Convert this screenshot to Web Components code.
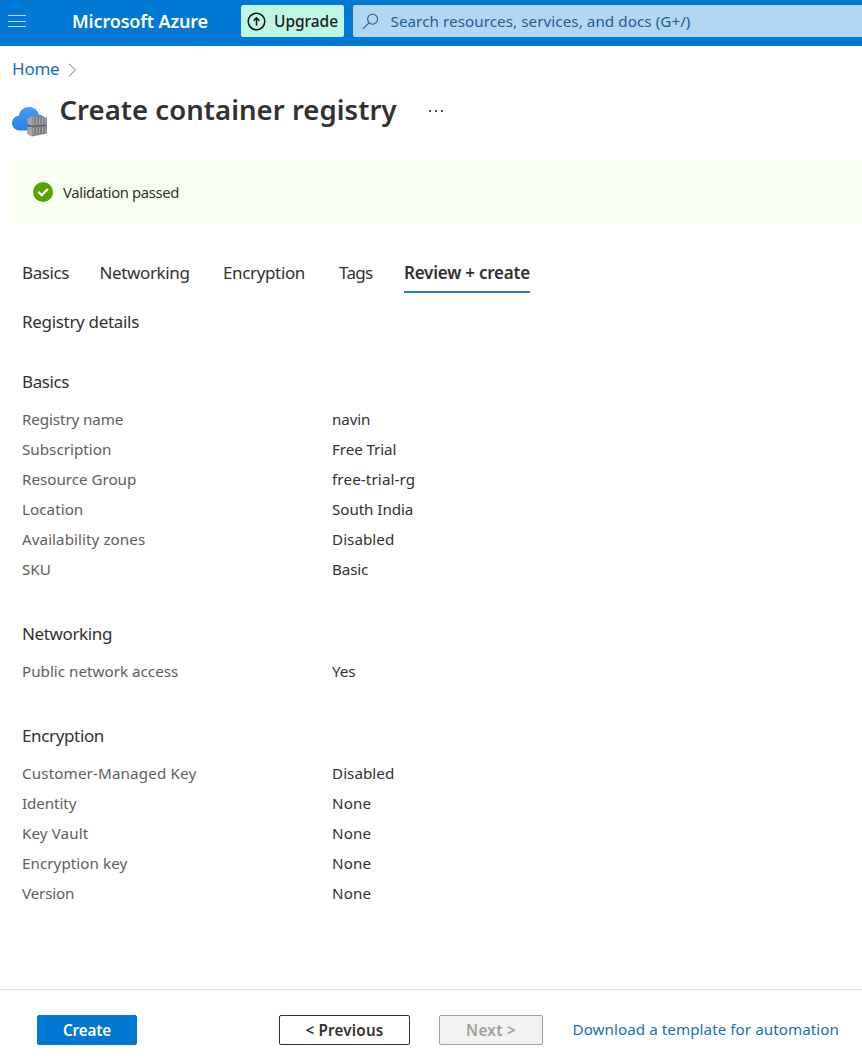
<!DOCTYPE html>
<html lang="en">
<head>
<meta charset="utf-8">
<title>Create container registry - Microsoft Azure</title>
<style>
html,body{margin:0;height:100%;background:#fff}
body{font-family:"Segoe UI","Noto Sans","Open Sans",sans-serif;color:#323130;overflow:hidden}
</style>
</head>
<body>
<portal-page></portal-page>
<script>
const define = (name, html, setup) => {
  const t = document.createElement('template');
  t.innerHTML = html;
  customElements.define(name, class extends HTMLElement {
    constructor() {
      super();
      this.attachShadow({mode: 'open'}).append(t.content.cloneNode(true));
    }
    connectedCallback() { if (setup) setup(this, this.shadowRoot); }
  });
};

/* Single line of text whose tracking is tuned to a given width. */
define('fit-text', `<style>:host{display:inline-block;white-space:pre;line-height:1.36}span{display:inline-block}</style><span></span>`, (el, root) => {
  const s = root.querySelector('span');
  s.textContent = el.getAttribute('text');
  const w = parseFloat(el.getAttribute('w'));
  const n = s.textContent.length;
  if (w) s.style.letterSpacing = ((w - s.getBoundingClientRect().width) / n).toFixed(3) + 'px';
});

define('portal-header', `<style>
:host{display:flex;height:46px;background:#0078d4;color:#fff;align-items:flex-start;flex:none}
.menu{width:18px;height:12px;margin:15px 0 0 8px;flex:none}
.brand{margin:9px 0 0 46px;font-size:18px;font-weight:600;width:169px;flex:none;line-height:0}
.up{display:flex;align-items:center;box-sizing:border-box;width:103px;height:32px;margin-top:5px;background:#bdf6e4;border-radius:2px;padding-left:6px;color:#1b1a19;font-size:15.5px;font-weight:540;flex:none}
.up svg{margin-right:8px;flex:none}
.up fit-text{margin-top:2px}
.search{display:flex;align-items:center;height:32px;margin:5px 0 0 9px;background:#b3d6f2;flex:1;border-radius:2px 0 0 2px;color:#245b8f;font-size:15.2px;padding-left:9px}
.search svg{margin-right:11.500px}
</style>
<svg class="menu" viewBox="0 0 18 12"><path d="M0 .5h18M0 6.5h18M0 11.5h18" stroke="#b9dcf5" stroke-width="1"/></svg>
<div class="brand"><fit-text text="Microsoft Azure" w="136"></fit-text></div>
<div class="up"><svg width="19" height="19" viewBox="0 0 19 19" fill="none" stroke="#111" stroke-width="1.5"><circle cx="9.5" cy="9.5" r="8.3"/><path d="M9.5 13.5V6M6.6 8.7l2.9-2.9 2.9 2.9"/></svg><fit-text text="Upgrade" w="64"></fit-text></div>
<div class="search"><svg width="17" height="17" viewBox="0 0 17 17" fill="none" stroke="#245b8f" stroke-width="1.1"><circle cx="10.6" cy="6.2" r="5"/><path d="M7 9.8.9 15.8"/></svg><fit-text text="Search resources, services, and docs (G+/)" w="300"></fit-text></div>`);

define('registry-icon', `<style>:host{display:block;width:36px;height:31px}</style>
<svg width="36" height="31" viewBox="0 0 36 31"><defs><linearGradient id="c" x1="0" y1="0" x2="0" y2="1"><stop offset="0" stop-color="#469cf2"/><stop offset="1" stop-color="#2b7de6"/></linearGradient></defs>
<path d="M8 24.5C3.5 24.5 0 21.3 0 17.2c0-4 3-6.8 6.8-7.4C7.9 4.3 11.8 1 17 1c4.800 0 8.700 3 10 7.800 4.500.6 7.400 3.500 7.400 7.700 0 4.500-3.500 8-8 8z" fill="url(#c)"/>
<path d="M15.500 12.500 20 10l15 1.500v7L21 20l-5.500-1.500z" fill="#8f8f8f"/>
<path d="M15.500 21.500l5.500-1.500 14-.5v8L20 30.500l-4.500-2.500z" fill="#858585"/>
<path d="M15.500 12.500 20 10v9.600l-4.500-1.100zM15.500 21.500 20 20.200v10.300l-4.500-2.500z" fill="#a5a5a5"/>
<path d="M15.500 19l5 1.500L35 19" fill="none" stroke="#555" stroke-width="1.200"/>
<path d="M21.700 12v6.300M24.700 12.200v6M27.700 12.400v5.600M30.700 12.600v5.200M33.300 12.800v4.800M21.700 22v6.500M24.700 21.800v6.200M27.700 21.600v6M30.700 21.400v5.700M33.300 21.200v5.300" stroke="#aaa" stroke-width="1.100"/>
<path d="M23 12v6.300M26 12.200v6M29 12.400v5.600M32 12.600v5.200M23 22v6.500M26 21.800v6.200M29 21.600v6M32 21.400v5.700" stroke="#696969" stroke-width=".8"/></svg>`);

define('page-heading', `<style>
:host{display:block;height:115px}
.crumb{display:flex;padding:11px 0 0 12px;height:23px;align-items:center;color:#1a6fb8;font-size:17px;box-sizing:content-box}
.crumb svg{margin-left:8px;margin-top:2px}
.row{display:flex;align-items:flex-start;padding-left:12px}
registry-icon{margin-top:26px}
h1{margin:11px 0 0 11.500px;font-size:27.5px;font-weight:560;line-height:0;width:369px;color:#323130}
.dots{margin-top:30px;display:flex;gap:4px}
.dots i{width:2px;height:2px;background:#555}
</style>
<div class="crumb"><fit-text text="Home" w="47.500"></fit-text><svg width="9" height="14" viewBox="0 0 9 14" fill="none" stroke="#777"><path d="M1 .8 7.500 7 1 13.200"/></svg></div>
<div class="row"><registry-icon></registry-icon><h1><fit-text text="Create container registry" w="337"></fit-text></h1><div class="dots"><i></i><i></i><i></i></div></div>`);

define('status-banner', `<style>
:host{display:flex;align-items:center;height:63px;margin-left:12px;padding-left:21px;background:#f8fff0;font-size:14.8px}
svg{margin-right:10px;margin-top:-1px}
</style>
<svg width="20" height="20" viewBox="0 0 20 20"><circle cx="10" cy="10" r="10" fill="#57a300"/><path d="M5.300 9.900 8.700 13.200 14.800 6.900" fill="none" stroke="#fff" stroke-width="2.200"/></svg><fit-text text="Validation passed" w="116"></fit-text>`);

define('tab-bar', `<style>
:host{display:grid;grid-template-columns:77.5px 123.5px 116px 65px 126px;padding-left:22px;margin-top:36px;height:34px;font-size:17px}
div{padding-top:1px;height:30px}
.on{font-weight:600;border-bottom:2px solid #2b7cc4}
</style>
<div><fit-text text="Basics" w="47"></fit-text></div><div><fit-text text="Networking" w="90"></fit-text></div><div><fit-text text="Encryption" w="82"></fit-text></div><div><fit-text text="Tags" w="33.500"></fit-text></div><div class="on"><fit-text text="Review + create" w="126"></fit-text></div>`);

define('detail-row', `<style>
:host{display:grid;grid-template-columns:310px 1fr;height:30px;align-items:center;font-size:15.2px}
.k{color:#605e5c}
</style><div class="k"><fit-text></fit-text></div><div><fit-text></fit-text></div>`, (el, root) => {
  const cells = root.querySelectorAll('fit-text');
  ['k', 'v'].forEach((key, i) => {
    const [text, w] = el.getAttribute(key).split('|');
    const n = document.createElement('fit-text');
    n.setAttribute('text', text);
    n.setAttribute('w', w - .7);
    cells[i].replaceWith(n);
  });
});

define('detail-section', `<style>
:host{display:block;padding-left:22px;margin-bottom:31px}
.t{height:38px;display:flex;align-items:center;font-size:17px;margin-bottom:3px}
</style><div class="t"><slot name="title"></slot></div><slot></slot>`);

define('portal-button', `<style>
:host{display:flex;box-sizing:border-box;height:30px;align-items:center;justify-content:center;border:1px solid #323130;border-radius:2px;font-size:15.2px;font-weight:600;flex:none}
:host([kind=primary]){background:#0078d4;border-color:#0078d4;color:#fff}
:host([kind=disabled]){background:#f3f2f1;border-color:#a19f9d;color:#a19f9d}
</style><slot></slot>`);

define('action-bar', `<style>
:host{display:flex;box-sizing:border-box;height:74px;border-top:1px solid #dcdcdc;padding:25px 0 0 37px;margin-top:auto;flex:none}
.a{width:100px;margin-right:142px}.b{width:131px;margin-right:29px}.c{width:104px;margin-right:29.500px}
.link{height:28px;display:flex;align-items:center;color:#1a6fb8;font-size:15.2px}
</style>
<portal-button class="a" kind="primary"><fit-text text="Create" w="48"></fit-text></portal-button>
<portal-button class="b"><fit-text text="&lt; Previous" w="78"></fit-text></portal-button>
<portal-button class="c" kind="disabled"><fit-text text="Next &gt;" w="50"></fit-text></portal-button>
<div class="link"><fit-text text="Download a template for automation" w="266.500"></fit-text></div>`);

define('portal-page', `<style>
:host{display:flex;flex-direction:column;height:100vh}
.sub{padding:16px 0 0 22px;height:55px;font-size:17px}
</style>
<portal-header></portal-header>
<page-heading></page-heading>
<status-banner></status-banner>
<tab-bar></tab-bar>
<div class="sub"><fit-text text="Registry details" w="117"></fit-text></div>
<detail-section style="margin-top:-2px"><fit-text slot="title" text="Basics" w="47"></fit-text>
<detail-row k="Registry name|102" v="navin|39"></detail-row>
<detail-row k="Subscription|90" v="Free Trial|65"></detail-row>
<detail-row k="Resource Group|115" v="free-trial-rg|84"></detail-row>
<detail-row k="Location|62" v="South India|82"></detail-row>
<detail-row k="Availability zones|124" v="Disabled|63"></detail-row>
<detail-row k="SKU|29.500" v="Basic|37"></detail-row></detail-section>
<detail-section><fit-text slot="title" text="Networking" w="90"></fit-text>
<detail-row k="Public network access|157" v="Yes|24"></detail-row></detail-section>
<detail-section><fit-text slot="title" text="Encryption" w="82"></fit-text>
<detail-row k="Customer-Managed Key|175" v="Disabled|63"></detail-row>
<detail-row k="Identity|55" v="None|40"></detail-row>
<detail-row k="Key Vault|67" v="None|40"></detail-row>
<detail-row k="Encryption key|106" v="None|40"></detail-row>
<detail-row k="Version|53" v="None|40"></detail-row></detail-section>
<action-bar></action-bar>`);
</script>
</body>
</html>
